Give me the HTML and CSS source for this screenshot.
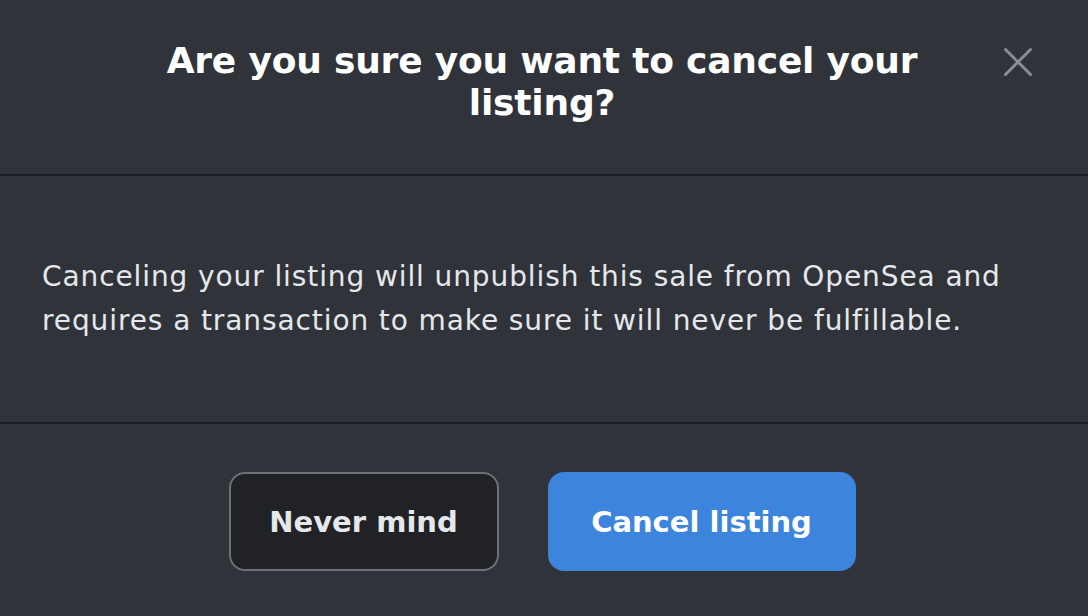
FILE: index.html
```html
<!DOCTYPE html>
<html lang="en">
<head>
<meta charset="utf-8">
<title>Cancel listing</title>
<link rel="stylesheet" href="styles.css">
</head>
<body>
<div class="modal">
  <header class="modal-header">
    <h2 class="modal-title">Are you sure you want to cancel your listing?</h2>
    <button class="close-btn" aria-label="Close">
      <svg width="30" height="30" viewBox="0 0 30 30" fill="none" stroke="currentColor" stroke-width="3" stroke-linecap="round">
        <path d="M2.5 2.5 L27.5 27.5 M27.5 2.5 L2.5 27.5"/>
      </svg>
    </button>
  </header>
  <section class="modal-body">
    <p class="modal-text">Canceling your listing will unpublish this sale from OpenSea and requires a transaction to make sure it will never be fulfillable.</p>
  </section>
  <footer class="modal-footer">
    <button class="btn btn-secondary">Never mind</button>
    <button class="btn btn-primary">Cancel listing</button>
  </footer>
</div>
</body>
</html>
```
FILE: styles.css
```css
* { box-sizing: border-box; }
html, body {
  margin: 0;
  padding: 0;
  background: #303339;
  font-family: "DejaVu Sans", "Open Sans", sans-serif;
}
.modal {
  width: 1088px;
  height: 616px;
  display: flex;
  flex-direction: column;
  background: #303339;
}
.modal-header {
  position: relative;
  height: 176px;
  padding: 40px 144px 0 140px;
  border-bottom: 2px solid #1b1d21;
}
.modal-title {
  margin: 0;
  text-align: center;
  color: #ffffff;
  font-size: 36px;
  line-height: 42px;
  letter-spacing: -0.2px;
  font-weight: 700;
}
.close-btn {
  position: absolute;
  top: 47px;
  right: 55px;
  width: 30px;
  height: 30px;
  padding: 0;
  border: 0;
  background: none;
  color: #8a8d93;
  display: flex;
}
.modal-body {
  height: 248px;
  border-bottom: 2px solid #1b1d21;
  display: flex;
  align-items: center;
  padding: 0 42px;
}
.modal-text {
  margin: 0;
  color: #e5e8eb;
  font-size: 28px;
  line-height: 44px;
  letter-spacing: 0.9px;
}
.modal-footer {
  flex: 1;
  display: flex;
  justify-content: center;
  align-items: flex-start;
  gap: 49px;
  padding: 48px 4px 0 0;
}
.btn {
  height: 99px;
  border-radius: 16px;
  font-family: inherit;
  font-size: 29px;
  font-weight: 700;
  cursor: pointer;
}
.btn-secondary {
  width: 270px;
  background: #202225;
  border: 2px solid #6e7178;
  color: #e5e8eb;
}
.btn-primary {
  width: 308px;
  background: #3d84dc;
  border: 0;
  color: #ffffff;
}
```
